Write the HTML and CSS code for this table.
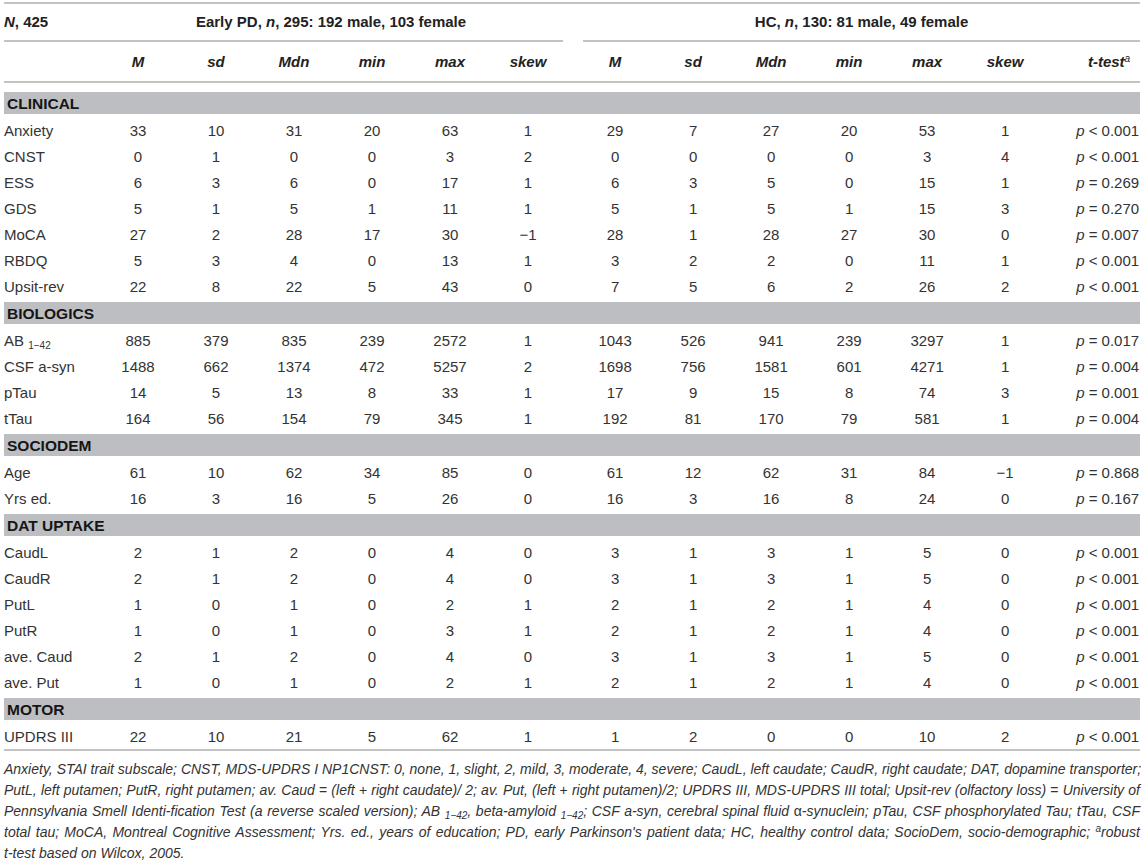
FILE: index.html
```html
<!DOCTYPE html>
<html lang="en">
<head>
<meta charset="utf-8">
<title>Early PD vs HC descriptive statistics</title>
<link rel="stylesheet" href="styles.css">
</head>
<body>
<div class="wrap">
<table class="stats">
<colgroup>
<col class="c-label">
<col class="c-num"><col class="c-num"><col class="c-num"><col class="c-num"><col class="c-num"><col class="c-num">
<col class="c-gap">
<col class="c-num"><col class="c-num"><col class="c-num"><col class="c-num"><col class="c-num"><col class="c-num">
<col class="c-test">
</colgroup>
<thead>
<tr class="grp-row">
<th class="grp-cell"><div class="grp grp-n"><i>N</i>, 425</div></th>
<th class="grp-cell" colspan="6"><div class="grp grp-pd">Early PD, <i class="it">n</i>, 295: 192 male, 103 female</div></th>
<th class="grp-cell"></th>
<th class="grp-cell" colspan="7"><div class="grp grp-hc">HC, <i class="it">n</i>, 130: 81 male, 49 female</div></th>
</tr>
<tr class="col-row">
<th></th>
<th>M</th><th>sd</th><th>Mdn</th><th>min</th><th>max</th><th>skew</th>
<th></th>
<th>M</th><th>sd</th><th>Mdn</th><th>min</th><th>max</th><th>skew</th>
<th class="t-head">t-test<sup>a</sup></th>
</tr>
</thead>
<tbody>
<tr class="band first"><td colspan="15"><div class="bar">CLINICAL</div></td></tr>
<tr><td class="lab">Anxiety</td><td>33</td><td>10</td><td>31</td><td>20</td><td>63</td><td>1</td><td></td><td>29</td><td>7</td><td>27</td><td>20</td><td>53</td><td>1</td><td class="tt"><i>p</i> &lt; 0.001</td></tr>
<tr><td class="lab">CNST</td><td>0</td><td>1</td><td>0</td><td>0</td><td>3</td><td>2</td><td></td><td>0</td><td>0</td><td>0</td><td>0</td><td>3</td><td>4</td><td class="tt"><i>p</i> &lt; 0.001</td></tr>
<tr><td class="lab">ESS</td><td>6</td><td>3</td><td>6</td><td>0</td><td>17</td><td>1</td><td></td><td>6</td><td>3</td><td>5</td><td>0</td><td>15</td><td>1</td><td class="tt"><i>p</i> = 0.269</td></tr>
<tr><td class="lab">GDS</td><td>5</td><td>1</td><td>5</td><td>1</td><td>11</td><td>1</td><td></td><td>5</td><td>1</td><td>5</td><td>1</td><td>15</td><td>3</td><td class="tt"><i>p</i> = 0.270</td></tr>
<tr><td class="lab">MoCA</td><td>27</td><td>2</td><td>28</td><td>17</td><td>30</td><td>−1</td><td></td><td>28</td><td>1</td><td>28</td><td>27</td><td>30</td><td>0</td><td class="tt"><i>p</i> = 0.007</td></tr>
<tr><td class="lab">RBDQ</td><td>5</td><td>3</td><td>4</td><td>0</td><td>13</td><td>1</td><td></td><td>3</td><td>2</td><td>2</td><td>0</td><td>11</td><td>1</td><td class="tt"><i>p</i> &lt; 0.001</td></tr>
<tr><td class="lab">Upsit-rev</td><td>22</td><td>8</td><td>22</td><td>5</td><td>43</td><td>0</td><td></td><td>7</td><td>5</td><td>6</td><td>2</td><td>26</td><td>2</td><td class="tt"><i>p</i> &lt; 0.001</td></tr>
<tr class="band"><td colspan="15"><div class="bar">BIOLOGICS</div></td></tr>
<tr><td class="lab">AB <sub>1−42</sub></td><td>885</td><td>379</td><td>835</td><td>239</td><td>2572</td><td>1</td><td></td><td>1043</td><td>526</td><td>941</td><td>239</td><td>3297</td><td>1</td><td class="tt"><i>p</i> = 0.017</td></tr>
<tr><td class="lab">CSF a-syn</td><td>1488</td><td>662</td><td>1374</td><td>472</td><td>5257</td><td>2</td><td></td><td>1698</td><td>756</td><td>1581</td><td>601</td><td>4271</td><td>1</td><td class="tt"><i>p</i> = 0.004</td></tr>
<tr><td class="lab">pTau</td><td>14</td><td>5</td><td>13</td><td>8</td><td>33</td><td>1</td><td></td><td>17</td><td>9</td><td>15</td><td>8</td><td>74</td><td>3</td><td class="tt"><i>p</i> = 0.001</td></tr>
<tr><td class="lab">tTau</td><td>164</td><td>56</td><td>154</td><td>79</td><td>345</td><td>1</td><td></td><td>192</td><td>81</td><td>170</td><td>79</td><td>581</td><td>1</td><td class="tt"><i>p</i> = 0.004</td></tr>
<tr class="band"><td colspan="15"><div class="bar">SOCIODEM</div></td></tr>
<tr><td class="lab">Age</td><td>61</td><td>10</td><td>62</td><td>34</td><td>85</td><td>0</td><td></td><td>61</td><td>12</td><td>62</td><td>31</td><td>84</td><td>−1</td><td class="tt"><i>p</i> = 0.868</td></tr>
<tr><td class="lab">Yrs ed.</td><td>16</td><td>3</td><td>16</td><td>5</td><td>26</td><td>0</td><td></td><td>16</td><td>3</td><td>16</td><td>8</td><td>24</td><td>0</td><td class="tt"><i>p</i> = 0.167</td></tr>
<tr class="band"><td colspan="15"><div class="bar">DAT UPTAKE</div></td></tr>
<tr><td class="lab">CaudL</td><td>2</td><td>1</td><td>2</td><td>0</td><td>4</td><td>0</td><td></td><td>3</td><td>1</td><td>3</td><td>1</td><td>5</td><td>0</td><td class="tt"><i>p</i> &lt; 0.001</td></tr>
<tr><td class="lab">CaudR</td><td>2</td><td>1</td><td>2</td><td>0</td><td>4</td><td>0</td><td></td><td>3</td><td>1</td><td>3</td><td>1</td><td>5</td><td>0</td><td class="tt"><i>p</i> &lt; 0.001</td></tr>
<tr><td class="lab">PutL</td><td>1</td><td>0</td><td>1</td><td>0</td><td>2</td><td>1</td><td></td><td>2</td><td>1</td><td>2</td><td>1</td><td>4</td><td>0</td><td class="tt"><i>p</i> &lt; 0.001</td></tr>
<tr><td class="lab">PutR</td><td>1</td><td>0</td><td>1</td><td>0</td><td>3</td><td>1</td><td></td><td>2</td><td>1</td><td>2</td><td>1</td><td>4</td><td>0</td><td class="tt"><i>p</i> &lt; 0.001</td></tr>
<tr><td class="lab">ave. Caud</td><td>2</td><td>1</td><td>2</td><td>0</td><td>4</td><td>0</td><td></td><td>3</td><td>1</td><td>3</td><td>1</td><td>5</td><td>0</td><td class="tt"><i>p</i> &lt; 0.001</td></tr>
<tr><td class="lab">ave. Put</td><td>1</td><td>0</td><td>1</td><td>0</td><td>2</td><td>1</td><td></td><td>2</td><td>1</td><td>2</td><td>1</td><td>4</td><td>0</td><td class="tt"><i>p</i> &lt; 0.001</td></tr>
<tr class="band"><td colspan="15"><div class="bar">MOTOR</div></td></tr>
<tr class="last"><td class="lab">UPDRS III</td><td>22</td><td>10</td><td>21</td><td>5</td><td>62</td><td>1</td><td></td><td>1</td><td>2</td><td>0</td><td>0</td><td>10</td><td>2</td><td class="tt"><i>p</i> &lt; 0.001</td></tr>
</tbody>
</table>
<div class="notes">
<p class="line">Anxiety, STAI trait subscale; CNST, MDS-UPDRS I NP1CNST: 0, none, 1, slight, 2, mild, 3, moderate, 4, severe; CaudL, left caudate; CaudR, right caudate; DAT, dopamine transporter;</p>
<p class="line">PutL, left putamen; PutR, right putamen; av. Caud <span class="up">=</span> (left <span class="up">+</span> right caudate)/ 2; av. Put, (left <span class="up">+</span> right putamen)/2; UPDRS III, MDS-UPDRS III total; Upsit-rev (olfactory loss) <span class="up">=</span> University of</p>
<p class="line">Pennsylvania Smell Identi-fication Test (a reverse scaled version); AB <sub>1−42</sub>, beta-amyloid <sub>1−42</sub>; CSF a-syn, cerebral spinal fluid <span class="up">α</span>-synuclein; pTau, CSF phosphorylated Tau; tTau, CSF</p>
<p class="line">total tau; MoCA, Montreal Cognitive Assessment; Yrs. ed., years of education; PD, early Parkinson's patient data; HC, healthy control data; SocioDem, socio-demographic; <sup>a</sup>robust</p>
<p class="line end">t-test based on Wilcox, 2005.</p>
</div>
</div>
</body>
</html>
```
FILE: styles.css
```css
html, body {
  margin: 0;
  padding: 0;
  background: #ffffff;
}

body {
  font-family: "Liberation Sans", Arial, Helvetica, sans-serif;
  color: #333333;
}

.wrap {
  width: 1136px;
  margin: 2px 0 0 4px;
}

.stats {
  width: 1136px;
  table-layout: fixed;
  border-collapse: separate;
  border-spacing: 0;
  border-top: 2px solid #c3c3c3;
  border-bottom: 2px solid #c3c3c3;
  font-size: 15px;
}

.c-label { width: 95px; }
.c-num { width: 78px; }
.c-gap { width: 9px; }
.c-test { width: 96px; }

th, td {
  padding: 0;
}

/* group header row */
.grp-row th {
  font-weight: bold;
  font-style: normal;
  color: #222222;
  vertical-align: bottom;
}

.grp {
  height: 36px;
  line-height: 36px;
  border-bottom: 2px solid #c3c3c3;
  text-align: center;
  white-space: nowrap;
}

.grp-n {
  text-align: left;
}

.grp-pd {
  margin-right: 4px;
}

.grp-hc {
  margin-left: 7px;
}

.grp .it {
  font-style: italic;
}

/* column header row */
.col-row th {
  height: 39px;
  border-bottom: 2px solid #c3c3c3;
  font-weight: bold;
  font-style: italic;
  color: #222222;
  text-align: center;
  vertical-align: middle;
}

.col-row .t-head {
  text-align: right;
  padding-right: 10px;
}

.t-head sup {
  font-size: 10px;
  font-weight: normal;
  vertical-align: 5px;
  line-height: 0;
}

/* data rows */
tbody td {
  height: 26px;
  text-align: center;
  vertical-align: middle;
  white-space: nowrap;
}

tbody td.lab {
  text-align: left;
}

tbody td.tt {
  text-align: right;
  padding-right: 1px;
}

/* bands */
tbody .band td {
  height: auto;
  padding: 3px 0 3px 0;
}

tbody .band.first td {
  padding-top: 9px;
}

.bar {
  height: 22px;
  line-height: 23px;
  background: #bdbec1;
  padding-left: 3px;
  text-align: left;
  font-size: 15.5px;
  font-weight: bold;
  color: #151515;
}

.lab sub,
.notes sub {
  font-size: 10px;
  vertical-align: -3px;
  line-height: 0;
}

/* notes */
.notes {
  padding-top: 8px;
  font-size: 14px;
  font-style: italic;
  color: #333333;
}

.notes .line {
  margin: 0;
  line-height: 21px;
  white-space: nowrap;
  text-align: justify;
  text-align-last: justify;
}

.notes .line.end {
  text-align-last: left;
}

.notes .up {
  font-style: normal;
}

.notes sup {
  font-size: 10px;
  vertical-align: 5px;
  line-height: 0;
}
```
